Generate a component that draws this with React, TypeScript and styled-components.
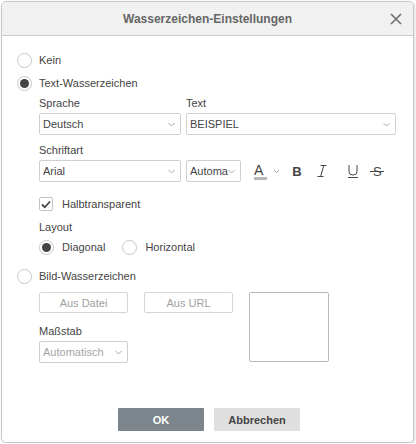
import React from "react";
import styled, { createGlobalStyle } from "styled-components";

const Global = createGlobalStyle`
  html, body { margin: 0; padding: 0; background: #fff; }
  body { font-family: "Liberation Sans", Arial, sans-serif; font-size: 11px; color: #444; }
  * { box-sizing: border-box; }
`;

const Dialog = styled.div`
  margin: 1px 0 0 1px;
  width: 413px;
  height: 442px;
  border: 1px solid #c8c8c8;
  border-radius: 5px;
  box-shadow: 1px 1px 3px rgba(0,0,0,0.15);
  display: flex;
  flex-direction: column;
  overflow: hidden;
  background: #fff;
`;

const Header = styled.div`
  height: 34px;
  flex: none;
  background: #f1f1f1;
  border-bottom: 1px solid #cbcbcb;
  display: flex;
  align-items: center;
  justify-content: center;
  position: relative;
  font-weight: bold;
  font-size: 12px;
  color: #666;
`;

const Close = styled.button`
  position: absolute;
  right: 9px;
  top: 9px;
  width: 16px;
  height: 16px;
  padding: 0;
  border: none;
  background: none;
  display: flex;
  align-items: center;
  justify-content: center;
`;

const Body = styled.div`
  flex: 1;
  padding: 15px 0 0 15px;
  display: flex;
  flex-direction: column;
`;

const RadioRow = styled.label<{ $mt?: number }>`
  display: flex;
  align-items: center;
  height: 18px;
  margin-top: ${(p) => p.$mt ?? 0}px;
  gap: 7px;
  color: #444;
`;

const RadioCircle = styled.span<{ $on?: boolean }>`
  width: 15px;
  height: 15px;
  border-radius: 50%;
  border: 1px solid #c8c8c8;
  background: #fff;
  display: flex;
  align-items: center;
  justify-content: center;
  flex: none;
  &::after {
    content: "";
    display: ${(p) => (p.$on ? "block" : "none")};
    width: 9px;
    height: 9px;
    border-radius: 50%;
    background: #444;
  }
`;

const Indent = styled.div`
  padding-left: 22px;
  display: flex;
  flex-direction: column;
`;

const FieldRow = styled.div<{ $mt?: number }>`
  display: flex;
  gap: 5px;
  margin-top: ${(p) => p.$mt ?? 0}px;
  align-items: flex-end;
`;

const Field = styled.div<{ $w: number }>`
  width: ${(p) => p.$w}px;
  display: flex;
  flex-direction: column;
`;

const Label = styled.div`
  height: 15px;
  line-height: 15px;
  margin-bottom: 2px;
  color: #444;
`;

const Select = styled.div<{ $w?: number; $disabled?: boolean }>`
  height: 22px;
  ${(p) => (p.$w ? `width: ${p.$w}px; flex: none;` : "")}
  border: 1px solid #cfcfcf;
  border-radius: 2px;
  display: flex;
  align-items: center;
  padding: 0 5px 0 3px;
  color: ${(p) => (p.$disabled ? "#a5a5a5" : "#444")};
  white-space: nowrap;
  overflow: hidden;
  span { flex: 1; overflow: hidden; }
`;

const Caret = () => (
  <svg width="7" height="5" viewBox="0 0 7 5" style={{ flex: "none" }}>
    <path d="M0.5 1 L3.5 4 L6.5 1" fill="none" stroke="#a8a8a8" strokeWidth="1" />
  </svg>
);

const Tools = styled.div`
  display: flex;
  align-items: center;
  height: 22px;
  margin-left: 8px;
`;

const ToolBtn = styled.div<{ $w: number; $start?: boolean }>`
  width: ${(p) => p.$w}px;
  height: 22px;
  display: flex;
  align-items: center;
  justify-content: ${(p) => (p.$start ? "flex-start" : "center")};
  color: #444;
`;

const BoldGlyph = styled.span`
  font-weight: bold;
  font-size: 13px;
`;

const CheckRow = styled.label`
  display: flex;
  align-items: center;
  gap: 9px;
  margin-top: 14px;
  height: 16px;
`;

const CheckBox = styled.span`
  width: 14px;
  height: 14px;
  border: 1px solid #c4c4c4;
  border-radius: 2px;
  display: flex;
  align-items: center;
  justify-content: center;
`;

const InlineRadios = styled.div`
  display: flex;
  gap: 17px;
  margin-top: 1px;
  label { gap: 8px; }
`;

const ImageArea = styled.div`
  display: flex;
  gap: 16px;
  margin-top: 7px;
`;

const ImageLeft = styled.div`
  display: flex;
  flex-direction: column;
`;

const BtnRow = styled.div`
  display: flex;
  gap: 16px;
`;

const GhostBtn = styled.div<{ $w: number }>`
  width: ${(p) => p.$w}px;
  height: 21px;
  border: 1px solid #d6d6d6;
  border-radius: 2px;
  display: flex;
  align-items: center;
  justify-content: center;
  color: #a0a0a0;
`;

const Preview = styled.div`
  width: 80px;
  height: 70px;
  border: 1px solid #b8b8b8;
  border-radius: 2px;
`;

const Footer = styled.div`
  flex: none;
  display: flex;
  justify-content: center;
  gap: 10px;
  padding: 0 0 11px 3px;
`;

const FootBtn = styled.div<{ $primary?: boolean }>`
  width: 86px;
  height: 23px;
  border-radius: 1px;
  background: ${(p) => (p.$primary ? "#7d858c" : "#dfdfdf")};
  color: ${(p) => (p.$primary ? "#fff" : "#444")};
  font-weight: bold;
  display: flex;
  align-items: center;
  justify-content: center;
`;

export default function App() {
  return (
    <>
      <Global />
      <Dialog>
        <Header>
          Wasserzeichen-Einstellungen
          <Close aria-label="close">
            <svg width="12" height="12" viewBox="0 0 12 12">
              <path d="M1 1 L11 11 M11 1 L1 11" stroke="#6e6e6e" strokeWidth="1.6" />
            </svg>
          </Close>
        </Header>
        <Body>
          <RadioRow $mt={0}>
            <RadioCircle />
            Kein
          </RadioRow>
          <RadioRow $mt={5}>
            <RadioCircle $on />
            Text-Wasserzeichen
          </RadioRow>
          <Indent>
            <FieldRow $mt={4}>
              <Field $w={142}>
                <Label>Sprache</Label>
                <Select>
                  <span>Deutsch</span>
                  <Caret />
                </Select>
              </Field>
              <Field $w={210}>
                <Label>Text</Label>
                <Select>
                  <span>BEISPIEL</span>
                  <Caret />
                </Select>
              </Field>
            </FieldRow>
            <FieldRow $mt={8}>
              <Field $w={142}>
                <Label>Schriftart</Label>
                <Select>
                  <span>Arial</span>
                  <Caret />
                </Select>
              </Field>
              <Select $w={55}>
                <span>Automa</span>
                <Caret />
              </Select>
              <Tools>
                <ToolBtn $w={34} $start>
                  <svg width="30" height="18" viewBox="0 0 30 18">
                    <text x="0" y="13" fontFamily="Liberation Sans, Arial, sans-serif" fontSize="14" fill="#444">A</text>
                    <rect x="0" y="15" width="13" height="3" fill="#b8b8b8" />
                    <path d="M20 8 L22.5 10.5 L25 8" fill="none" stroke="#a8a8a8" strokeWidth="1" />
                  </svg>
                </ToolBtn>
                <ToolBtn $w={18}>
                  <BoldGlyph>B</BoldGlyph>
                </ToolBtn>
                <ToolBtn $w={32}>
                  <svg width="10" height="14" viewBox="0 0 10 14">
                    <path d="M3.5 1.5 H9.5 M6.8 1.5 L3.6 12.5 M0.5 12.5 H6.5" stroke="#444" strokeWidth="1" fill="none" />
                  </svg>
                </ToolBtn>
                <ToolBtn $w={30}>
                  <svg width="12" height="14" viewBox="0 0 12 14">
                    <path d="M2 1 V8 Q2 11 6 11 Q10 11 10 8 V1 M1 13.5 H11" stroke="#444" strokeWidth="1" fill="none" />
                  </svg>
                </ToolBtn>
                <ToolBtn $w={18}>
                  <svg width="14" height="14" viewBox="0 0 14 14">
                    <text x="3" y="12" fontFamily="Liberation Sans, Arial, sans-serif" fontSize="13" fill="#444">S</text>
                    <path d="M0 7.5 H14" stroke="#444" strokeWidth="1" />
                  </svg>
                </ToolBtn>
              </Tools>
            </FieldRow>
            <CheckRow>
              <CheckBox>
                <svg width="10" height="9" viewBox="0 0 10 9">
                  <path d="M1 4.5 L3.8 7.3 L9 1.5" stroke="#444" strokeWidth="1.8" fill="none" />
                </svg>
              </CheckBox>
              Halbtransparent
            </CheckRow>
            <Label style={{ marginTop: 8 }}>Layout</Label>
            <InlineRadios>
              <RadioRow>
                <RadioCircle $on />
                Diagonal
              </RadioRow>
              <RadioRow>
                <RadioCircle />
                Horizontal
              </RadioRow>
            </InlineRadios>
          </Indent>
          <RadioRow $mt={11}>
            <RadioCircle />
            Bild-Wasserzeichen
          </RadioRow>
          <Indent>
            <ImageArea>
              <ImageLeft>
                <BtnRow>
                  <GhostBtn $w={89}>Aus Datei</GhostBtn>
                  <GhostBtn $w={89}>Aus URL</GhostBtn>
                </BtnRow>
                <Label style={{ marginTop: 11, marginBottom: 2 }}>Maßstab</Label>
                <Select $w={89} $disabled>
                  <span>Automatisch</span>
                  <Caret />
                </Select>
              </ImageLeft>
              <Preview />
            </ImageArea>
          </Indent>
        </Body>
        <Footer>
          <FootBtn $primary>OK</FootBtn>
          <FootBtn>Abbrechen</FootBtn>
        </Footer>
      </Dialog>
    </>
  );
}
